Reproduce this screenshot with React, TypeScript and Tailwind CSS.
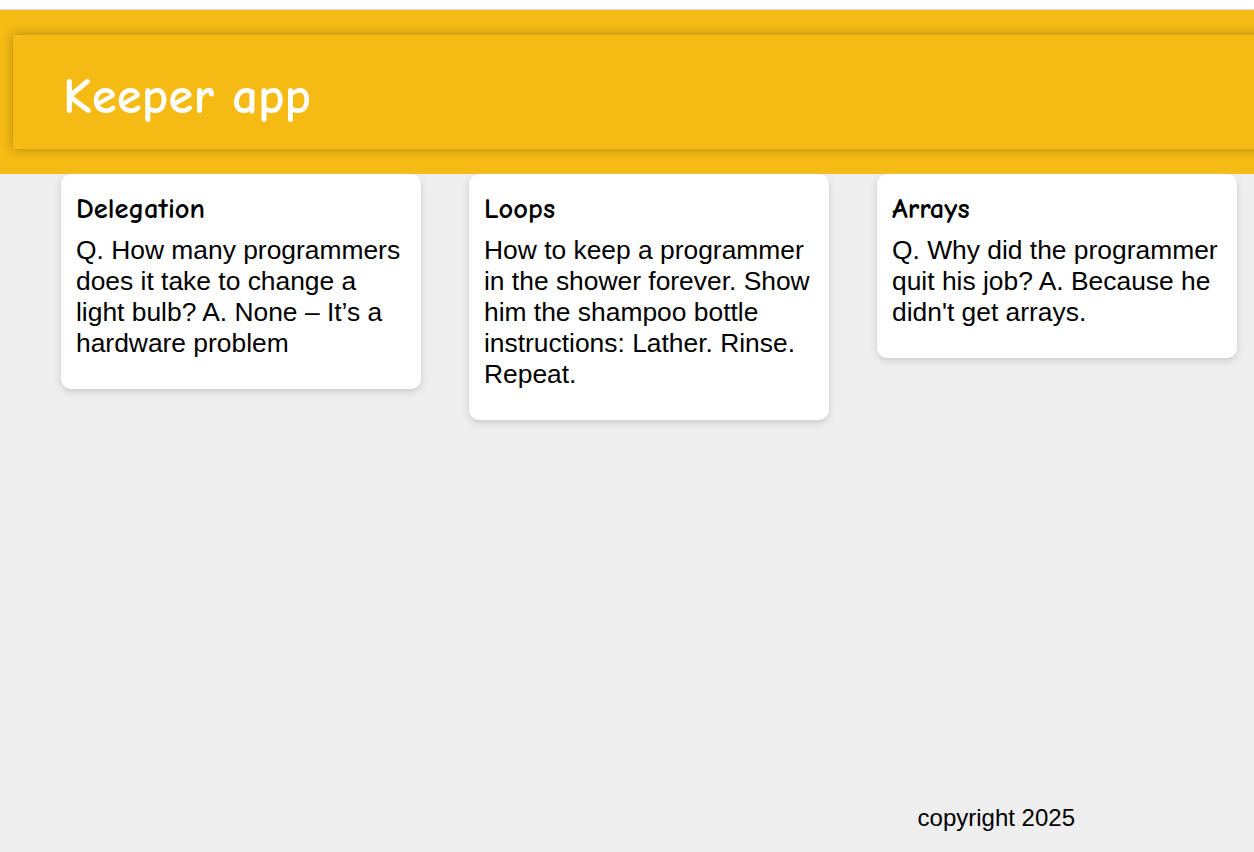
const notes = [
  {
    title: "Delegation",
    content:
      "Q. How many programmers does it take to change a light bulb? A. None – It’s a hardware problem",
  },
  {
    title: "Loops",
    content:
      "How to keep a programmer in the shower forever. Show him the shampoo bottle instructions: Lather. Rinse. Repeat.",
  },
  {
    title: "Arrays",
    content:
      "Q. Why did the programmer quit his job? A. Because he didn't get arrays.",
  },
];

const comic = "font-['Comic_Sans_MS','Comic_Neue',cursive]";

function Header() {
  return (
    <div className="h-[164px] bg-[#f5ba13] pt-[25px] pl-[13px] overflow-hidden">
      <header className="h-[114px] w-[calc(100%+20px)] bg-[#f5ba13] shadow-[0_0_10px_0_rgba(0,0,0,0.3)] pl-[50px] pt-[10px] flex items-center">
        <h1 className={`${comic} text-white text-[51px] font-semibold`}>Keeper app</h1>
      </header>
    </div>
  );
}

function Note({ title, content }: { title: string; content: string }) {
  return (
    <div className="w-[360px] bg-white rounded-[10px] shadow-[0_3px_7px_#ccc] p-[15px]">
      <h1 className={`${comic} text-[28.5px] leading-[39px] font-bold mb-[7px]`}>{title}</h1>
      <p className="font-['Liberation_Sans',Arial,sans-serif] text-[26.4px] leading-[31px] mb-[15px] whitespace-pre-wrap break-words">
        {content}
      </p>
    </div>
  );
}

export default function App() {
  return (
    <div className="min-h-[852px] bg-[#eeeeee] flex flex-col overflow-hidden text-black">
      <div className="h-[10px] bg-white border-b border-[#dcdcdc]" />
      <Header />
      <div className="flex items-start gap-[48px] pl-[61px]">
        {notes.map((note, index) => (
          <Note key={index} title={note.title} content={note.content} />
        ))}
      </div>
      <div className="flex-1" />
      <footer className="flex justify-end pr-[179px] pb-[16px]">
        <p className="font-['Liberation_Sans',Arial,sans-serif] text-[24px]">copyright 2025</p>
      </footer>
    </div>
  );
}
